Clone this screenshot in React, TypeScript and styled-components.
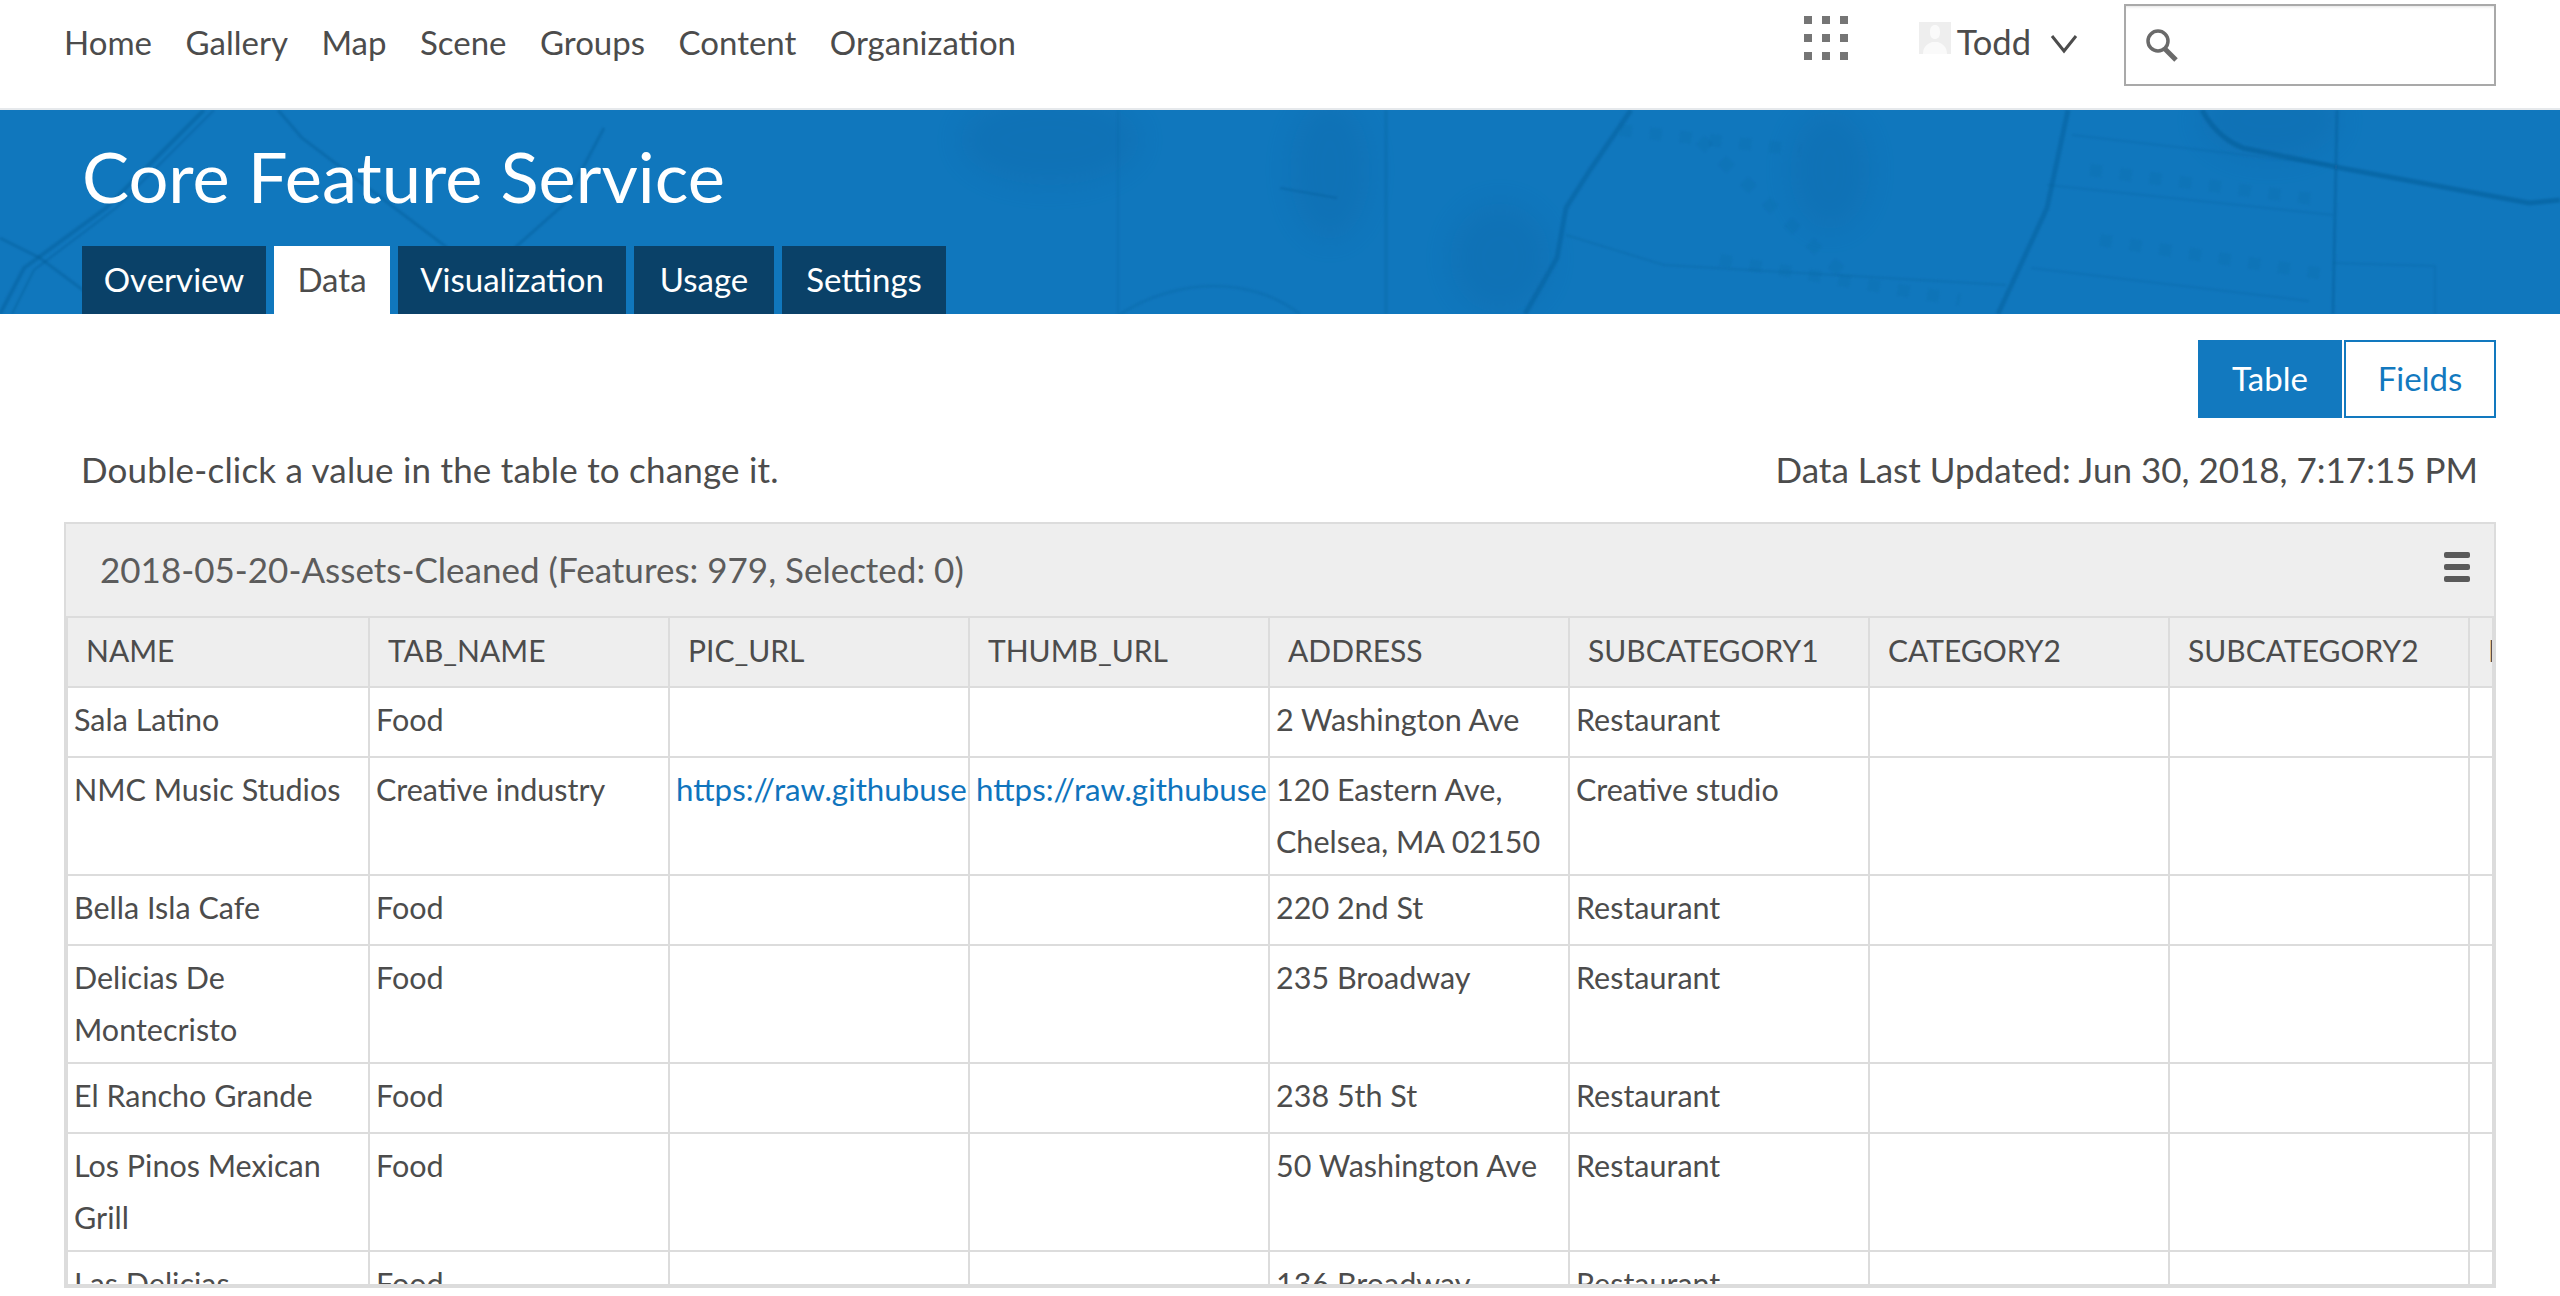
import * as React from 'react';
import styled, { createGlobalStyle } from 'styled-components';

const BLUE = '#1279bf';
const TEXT = '#4c4c4c';
const LINE = '#dcdcdc';
const FONT = 'Lato, "Noto Sans", "Liberation Sans", sans-serif';

const GlobalStyle = createGlobalStyle`
    html, body {
        margin: 0;
        padding: 0;
        background: #fff;
        overflow: hidden;
    }
    body {
        font-family: ${FONT};
        color: ${TEXT};
    }
`;

const Page = styled.div`
    width: 2560px;
    height: 1296px;
    overflow: hidden;
`;

const TopBar = styled.header`
    height: 110px;
    box-sizing: border-box;
    border-bottom: 2px solid #e6e9ec;
    display: flex;
    align-items: flex-start;
    padding: 4px 64px 0 64px;
`;

const Nav = styled.nav`
    display: flex;
    gap: 33.5px;
    padding-top: 16px;
    flex: 1;
`;

const NavLink = styled.a`
    font-size: 33px;
    line-height: 44px;
    color: ${TEXT};
`;

const AppsGrid = styled.div`
    display: grid;
    grid-template-columns: repeat(3, 8px);
    grid-auto-rows: 8px;
    gap: 10px 10px;
    margin: 12px 71px 0 0;
`;

const AppsDot = styled.span`
    background: #757575;
`;

const UserBox = styled.div`
    display: flex;
    align-items: flex-start;
    margin-right: 46px;
`;

const UserName = styled.span`
    font-size: 34.5px;
    line-height: 44px;
    margin: 16px 19px 0 6px;
`;

const AvatarIcon = styled.svg`
    width: 32px;
    height: 32px;
    margin-top: 18px;
`;

const Chevron = styled.svg`
    width: 28px;
    height: 20px;
    margin-top: 30px;
`;

const SearchBox = styled.div`
    width: 372px;
    height: 82px;
    box-sizing: border-box;
    border: 2px solid #a9a9a9;
    box-shadow: inset 0 3px 3px -2px #e2e2e2;
    display: flex;
    align-items: center;
    padding-left: 19px;
`;

const SearchIcon = styled.svg`
    width: 34px;
    height: 34px;
`;

const Banner = styled.section`
    position: relative;
    height: 204px;
    background: #1077bd;
    overflow: hidden;
    padding: 0 82px;
    display: flex;
    flex-direction: column;
`;

const MapTexture = styled.svg`
    position: absolute;
    left: 0;
    top: 0;
    width: 2560px;
    height: 204px;
`;

const Title = styled.h1`
    position: relative;
    margin: 20px 0 0 0;
    font-size: 70.5px;
    line-height: 92px;
    font-weight: 400;
    color: #fff;
`;

const Tabs = styled.div`
    position: relative;
    margin-top: 24px;
    display: flex;
    gap: 8px;
`;

const Tab = styled.a<{ $active?: boolean; $width: number }>`
    height: 68px;
    box-sizing: border-box;
    padding-bottom: 2px;
    width: ${(props) => props.$width}px;
    display: flex;
    align-items: center;
    justify-content: center;
    font-size: 33px;
    background: ${(props) => (props.$active ? '#fff' : '#0a4168')};
    color: ${(props) => (props.$active ? TEXT : '#fff')};
`;

const Content = styled.main`
    padding: 26px 64px 0 64px;
`;

const ToggleRow = styled.div`
    display: flex;
    justify-content: flex-end;
    gap: 2px;
`;

const ToggleButton = styled.button<{ $active?: boolean; $width: number }>`
    width: ${(props) => props.$width}px;
    height: 78px;
    box-sizing: border-box;
    border: 2px solid ${BLUE};
    background: ${(props) => (props.$active ? BLUE : '#fff')};
    color: ${(props) => (props.$active ? '#fff' : BLUE)};
    font-family: ${FONT};
    font-size: 33px;
    padding: 0 0 2px 0;
`;

const InfoRow = styled.div`
    display: flex;
    justify-content: space-between;
    padding: 29px 18px 0 17px;
    height: 82px;
    box-sizing: border-box;
    font-size: 35px;
    line-height: 44px;
    margin-bottom: 22px;
`;

const Hint = styled.span`
    letter-spacing: 0.2px;
`;

const Panel = styled.div`
    height: 766px;
    box-sizing: border-box;
    border: 2px solid ${LINE};
    border-bottom-width: 4px;
    overflow: hidden;
    display: flex;
    flex-direction: column;
    background: #fff;
`;

const PanelHeader = styled.div`
    flex: none;
    height: 94px;
    box-sizing: border-box;
    border-bottom: 2px solid ${LINE};
    background: #eee;
    display: flex;
    align-items: center;
    justify-content: space-between;
    padding: 0 24px 2px 34px;
    font-size: 35px;
    color: #5c5c5c;
`;

const MenuIcon = styled.div`
    width: 26px;
    display: flex;
    flex-direction: column;
    gap: 6px;
    margin-top: -4px;
`;

const MenuBar = styled.span`
    height: 6px;
    border-radius: 2px;
    background: #5a5a5a;
`;

const GridFrame = styled.div`
    flex: none;
    border-left: 2px solid ${LINE};
    border-right: 2px solid ${LINE};
`;

const Grid = styled.table`
    width: 2424px;
    table-layout: fixed;
    border-collapse: separate;
    border-spacing: 0;
`;

const HeadCell = styled.th<{ $first?: boolean }>`
    width: ${(props) => (props.$first ? 302 : 300)}px;
    height: 70px;
    box-sizing: border-box;
    padding: 0 18px 5px 18px;
    background: #eee;
    border-right: 2px solid ${LINE};
    border-bottom: 2px solid ${LINE};
    text-align: left;
    font-size: 30px;
    font-weight: 400;
    color: ${TEXT};
    white-space: nowrap;
    overflow: hidden;
`;

const Cell = styled.td`
    height: 70px;
    box-sizing: border-box;
    padding: 5px 6px 7px 6px;
    border-right: 2px solid ${LINE};
    border-bottom: 2px solid ${LINE};
    vertical-align: top;
    font-size: 30.5px;
    line-height: 52px;
    color: ${TEXT};
    overflow: hidden;
`;

const CellLink = styled.a`
    color: #0f74bd;
    font-size: 31.3px;
    white-space: nowrap;
`;

const StubCell = styled(HeadCell)`
    width: 22px;
    padding: 0 0 5px 18px;
    border-right-width: 0;
`;

const StubBody = styled(Cell)`
    width: 22px;
    border-right-width: 0;
`;

const NAV_ITEMS = ['Home', 'Gallery', 'Map', 'Scene', 'Groups', 'Content', 'Organization'];

const TABS = [
    { label: 'Overview', width: 184 },
    { label: 'Data', width: 116, active: true },
    { label: 'Visualization', width: 228 },
    { label: 'Usage', width: 140 },
    { label: 'Settings', width: 164 },
];

const COLUMNS = ['NAME', 'TAB_NAME', 'PIC_URL', 'THUMB_URL', 'ADDRESS', 'SUBCATEGORY1', 'CATEGORY2', 'SUBCATEGORY2'];

const URL_TEXT = 'https://raw.githubuse';

const ROWS = [
    { name: 'Sala Latino', tab: 'Food', address: '2 Washington Ave', sub: 'Restaurant' },
    { name: 'NMC Music Studios', tab: 'Creative industry', pic: URL_TEXT, thumb: URL_TEXT, address: '120 Eastern Ave, Chelsea, MA 02150', sub: 'Creative studio' },
    { name: 'Bella Isla Cafe', tab: 'Food', address: '220 2nd St', sub: 'Restaurant' },
    { name: 'Delicias De Montecristo', tab: 'Food', address: '235 Broadway', sub: 'Restaurant' },
    { name: 'El Rancho Grande', tab: 'Food', address: '238 5th St', sub: 'Restaurant' },
    { name: 'Los Pinos Mexican Grill', tab: 'Food', address: '50 Washington Ave', sub: 'Restaurant' },
    { name: 'Las Delicias', tab: 'Food', address: '136 Broadway', sub: 'Restaurant' },
];

const BannerMap = () => (
    <MapTexture viewBox="0 0 2560 204" fill="none" stroke="#0a5a94">
        <defs>
            <filter id="soft"><feGaussianBlur stdDeviation="1" /></filter>
            <filter id="softer"><feGaussianBlur stdDeviation="14" /></filter>
        </defs>
        <g filter="url(#softer)" stroke="none" fill="#0a5a94" opacity="0.16">
            <ellipse cx="1500" cy="148" rx="50" ry="55" />
            <ellipse cx="1050" cy="30" rx="90" ry="45" />
            <ellipse cx="1330" cy="60" rx="40" ry="70" />
            <ellipse cx="1830" cy="60" rx="40" ry="60" />
            <ellipse cx="2270" cy="10" rx="70" ry="40" />
        </g>
        <g filter="url(#soft)" strokeOpacity="0.4">
            <path d="M204 0 L106 98 L24 158 L0 204" strokeWidth="4" />
            <path d="M214 0 L116 98 L34 160 L12 204" strokeWidth="2" />
            <path d="M0 128 L40 148 L115 204" strokeWidth="3" />
            <path d="M278 0 L302 28 L457 145 L498 204" strokeWidth="3" />
            <path d="M604 18 L563 95 L440 204" strokeWidth="3" />
            <path d="M1118 0 L1118 204" strokeWidth="2" strokeOpacity="0.2" />
            <path d="M1040 300 C1100 170 1230 150 1300 204" strokeWidth="3" strokeOpacity="0.22" />
            <path d="M1386 0 L1386 204" strokeWidth="3" strokeOpacity="0.25" />
            <path d="M1631 0 L1590 60 L1566 98 L1557 148 L1525 204" strokeWidth="5" />
            <path d="M1280 78 L1337 88" strokeWidth="2" />
            <path d="M1566 125 L1664 155 L2006 175" strokeWidth="2" strokeOpacity="0.25" />
            <path d="M2068 0 L2047 98 L1998 204" strokeWidth="5" />
            <path d="M2202 0 C2215 25 2235 35 2243 38 L2341 58 L2529 93 L2560 90" strokeWidth="5" strokeOpacity="0.5" />
            <path d="M2337 0 L2333 204" strokeWidth="3" />
            <path d="M2072 25 L2333 55" strokeWidth="2" strokeOpacity="0.22" />
            <path d="M2047 75 L2333 105" strokeWidth="2" strokeOpacity="0.22" />
            <path d="M2031 158 L2309 191" strokeWidth="2" strokeOpacity="0.22" />
            <path d="M2333 153 L2435 156 L2435 204" strokeWidth="2" strokeOpacity="0.22" />
        </g>
        <g filter="url(#soft)" strokeOpacity="0.13" strokeWidth="12" strokeDasharray="12 18">
            <path d="M1700 30 L1850 170" />
            <path d="M1720 150 L1960 190" />
            <path d="M2090 60 L2320 90" />
            <path d="M2100 130 L2330 165" />
            <path d="M1620 20 L1800 40" />
        </g>
    </MapTexture>
);

const App = () => (
    <Page>
        <GlobalStyle />
        <TopBar>
            <Nav>
                {NAV_ITEMS.map((item) => <NavLink key={item}>{item}</NavLink>)}
            </Nav>
            <AppsGrid>
                {Array.from({ length: 9 }, (_, i) => <AppsDot key={i} />)}
            </AppsGrid>
            <UserBox>
                <AvatarIcon viewBox="0 0 32 32">
                    <rect width="32" height="32" fill="#eeeeee" />
                    <path d="M11 10c0-5 2-7 5-7s5 2 5 7-2 7-5 7-5-2-5-7zM4 32c0-8 5-10 9-12h6c4 2 9 4 9 12z" fill="#fafafa" />
                </AvatarIcon>
                <UserName>Todd</UserName>
                <Chevron viewBox="0 0 28 20" fill="none" stroke="#4c4c4c" strokeWidth="3">
                    <path d="M2 2 L14 17 L26 2" />
                </Chevron>
            </UserBox>
            <SearchBox>
                <SearchIcon viewBox="0 0 34 34" fill="none" stroke="#6a6a6a">
                    <circle cx="13" cy="13" r="10" strokeWidth="3.5" />
                    <path d="M20 21 L31 32" strokeWidth="5" />
                </SearchIcon>
            </SearchBox>
        </TopBar>
        <Banner>
            <BannerMap />
            <Title>Core Feature Service</Title>
            <Tabs>
                {TABS.map((tab) => <Tab key={tab.label} $active={tab.active} $width={tab.width}>{tab.label}</Tab>)}
            </Tabs>
        </Banner>
        <Content>
            <ToggleRow>
                <ToggleButton $active $width={144}>Table</ToggleButton>
                <ToggleButton $width={152}>Fields</ToggleButton>
            </ToggleRow>
            <InfoRow>
                <Hint>Double-click a value in the table to change it.</Hint>
                <span>Data Last Updated: Jun 30, 2018, 7:17:15 PM</span>
            </InfoRow>
            <Panel>
                <PanelHeader>
                    <span>2018-05-20-Assets-Cleaned (Features: 979, Selected: 0)</span>
                    <MenuIcon><MenuBar /><MenuBar /><MenuBar /></MenuIcon>
                </PanelHeader>
                <GridFrame>
                    <Grid>
                        <thead>
                            <tr>
                                {COLUMNS.map((col, i) => <HeadCell key={col} $first={i === 0}>{col}</HeadCell>)}
                                <StubCell>I</StubCell>
                            </tr>
                        </thead>
                        <tbody>
                            {ROWS.map((row) => (
                                <tr key={row.name}>
                                    <Cell>{row.name}</Cell>
                                    <Cell>{row.tab}</Cell>
                                    <Cell>{row.pic && <CellLink>{row.pic}</CellLink>}</Cell>
                                    <Cell>{row.thumb && <CellLink>{row.thumb}</CellLink>}</Cell>
                                    <Cell>{row.address}</Cell>
                                    <Cell>{row.sub}</Cell>
                                    <Cell />
                                    <Cell />
                                    <StubBody />
                                </tr>
                            ))}
                        </tbody>
                    </Grid>
                </GridFrame>
            </Panel>
        </Content>
    </Page>
);

export default App;
